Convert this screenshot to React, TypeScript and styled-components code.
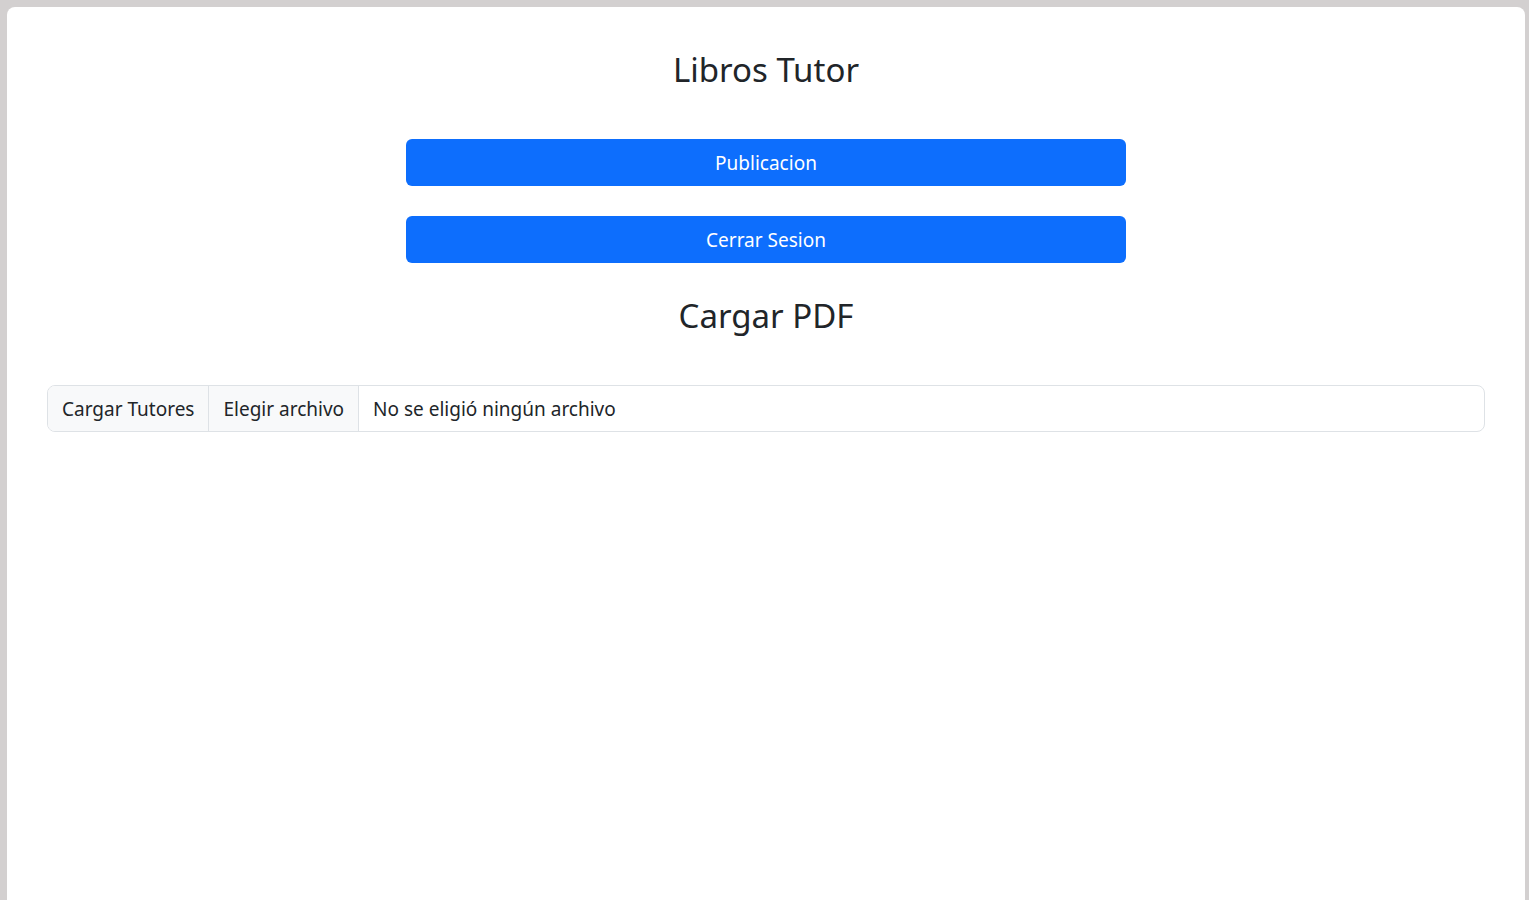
import styled, { createGlobalStyle } from 'styled-components'

const GlobalStyle = createGlobalStyle`
    html, body {
        margin: 0;
        padding: 0;
        height: 100%;
    }
    body {
        background: #d3d0d0;
        font-family: 'Noto Sans', 'Open Sans', sans-serif;
        color: #212529;
    }
    #root {
        height: 100%;
    }
`

const Frame = styled.div`
    height: 100%;
    box-sizing: border-box;
    padding: 7px 4px 0 7px;
`

const Card = styled.main`
    height: 100%;
    box-sizing: border-box;
    background: #fff;
    border-radius: 8px 8px 0 0;
    padding: 42px 40px 0;
    display: flex;
    flex-direction: column;
    align-items: center;
`

const Heading = styled.h2<{ gap: number }>`
    margin: 0 0 ${(props) => props.gap}px;
    font-size: 33px;
    font-weight: 400;
    line-height: 42px;
    color: #212529;
    text-align: center;
`

const Actions = styled.div`
    width: 720px;
    display: flex;
    flex-direction: column;
    gap: 30px;
    margin-bottom: 32px;
`

const Button = styled.button`
    height: 47px;
    padding-top: 2px;
    border: none;
    border-radius: 6px;
    background: #0d6efd;
    color: #fff;
    font-family: inherit;
    font-size: 19px;
    cursor: pointer;
`

const InputGroup = styled.div`
    align-self: stretch;
    height: 47px;
    display: flex;
    border: 1px solid #dee2e6;
    border-radius: 8px;
    box-sizing: border-box;
    overflow: hidden;
    font-size: 19px;
`

const Segment = styled.span<{ filled?: boolean }>`
    display: flex;
    align-items: center;
    padding: 0 14px;
    background: ${(props) => (props.filled ? '#f8f9fa' : '#fff')};
    border-right: ${(props) => (props.filled ? '1px solid #dee2e6' : 'none')};
    white-space: nowrap;
`

export default function App() {
    return (
        <>
            <GlobalStyle />
            <Frame>
                <Card>
                    <Heading gap={48}>Libros Tutor</Heading>
                    <Actions>
                        <Button>Publicacion</Button>
                        <Button>Cerrar Sesion</Button>
                    </Actions>
                    <Heading gap={48}>Cargar PDF</Heading>
                    <InputGroup>
                        <Segment filled>Cargar Tutores</Segment>
                        <Segment filled>Elegir archivo</Segment>
                        <Segment>No se eligió ningún archivo</Segment>
                    </InputGroup>
                </Card>
            </Frame>
        </>
    )
}
